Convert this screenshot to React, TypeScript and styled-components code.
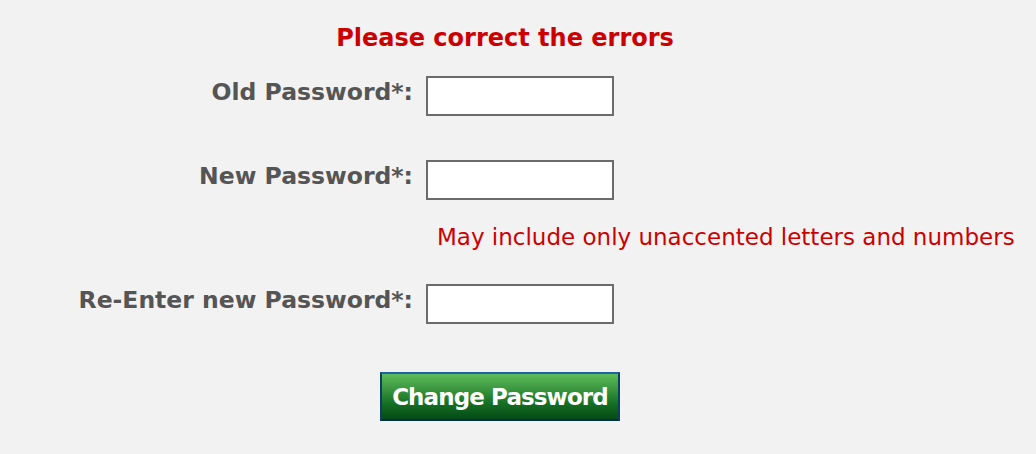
import React from "react";
import styled, { createGlobalStyle } from "styled-components";

const Global = createGlobalStyle`
  html, body { margin: 0; padding: 0; background: #f2f2f2; }
  body { font-family: "DejaVu Sans", Verdana, sans-serif; }
`;

const Page = styled.div`
  width: 1036px;
  height: 454px;
  background: #f2f2f2;
  padding-top: 22px;
  box-sizing: border-box;
`;

const Title = styled.h1`
  margin: 0;
  width: 1010px;
  text-align: center;
  font-size: 24px;
  font-weight: bold;
  color: #cc0000;
  line-height: 33px;
`;

const Form = styled.div`
  display: grid;
  grid-template-columns: 413px 1fr;
  column-gap: 13px;
  margin-top: 21px;
`;

const Label = styled.label`
  text-align: right;
  font-size: 23.5px;
  font-weight: bold;
  color: #555555;
  line-height: 32px;
  height: 40px;
  white-space: nowrap;
`;

const Field = styled.div<{ $gap: number }>`
  margin-bottom: ${(p) => p.$gap}px;
`;

const Input = styled.input`
  display: block;
  width: 188px;
  height: 40px;
  box-sizing: border-box;
  border: 2px solid #6b6b6b;
  background: #ffffff;
  margin: 0;
  padding: 0 4px;
`;

const Hint = styled.div`
  font-size: 23px;
  color: #cc0000;
  padding-left: 11px;
  margin-top: 22px;
  margin-bottom: 32px;
  line-height: 30px;
  white-space: nowrap;
`;

const Actions = styled.div`
  width: 1000px;
  display: flex;
  justify-content: center;
  margin-top: 48px;
`;

const Button = styled.button`
  width: 240px;
  height: 49px;
  box-sizing: border-box;
  border: 2px solid;
  border-color: #1d64a0 #0a3f66 #00304f #0a3f66;
  background: linear-gradient(#5dbd5b 0%, #3f9a42 30%, #157024 65%, #054a16 100%);
  color: #ffffff;
  font-family: "DejaVu Sans", Verdana, sans-serif;
  font-size: 23px;
  letter-spacing: -0.9px;
  font-weight: bold;
  padding: 0;
  cursor: pointer;
`;

export default function App() {
  return (
    <Page>
      <Global />
      <Title>Please correct the errors</Title>
      <Form>
        <Label>Old Password*:</Label>
        <Field $gap={44}>
          <Input type="password" />
        </Field>
        <Label>New Password*:</Label>
        <Field $gap={0}>
          <Input type="password" />
          <Hint>May include only unaccented letters and numbers</Hint>
        </Field>
        <Label>Re-Enter new Password*:</Label>
        <Field $gap={0}>
          <Input type="password" />
        </Field>
      </Form>
      <Actions>
        <Button>Change Password</Button>
      </Actions>
    </Page>
  );
}
